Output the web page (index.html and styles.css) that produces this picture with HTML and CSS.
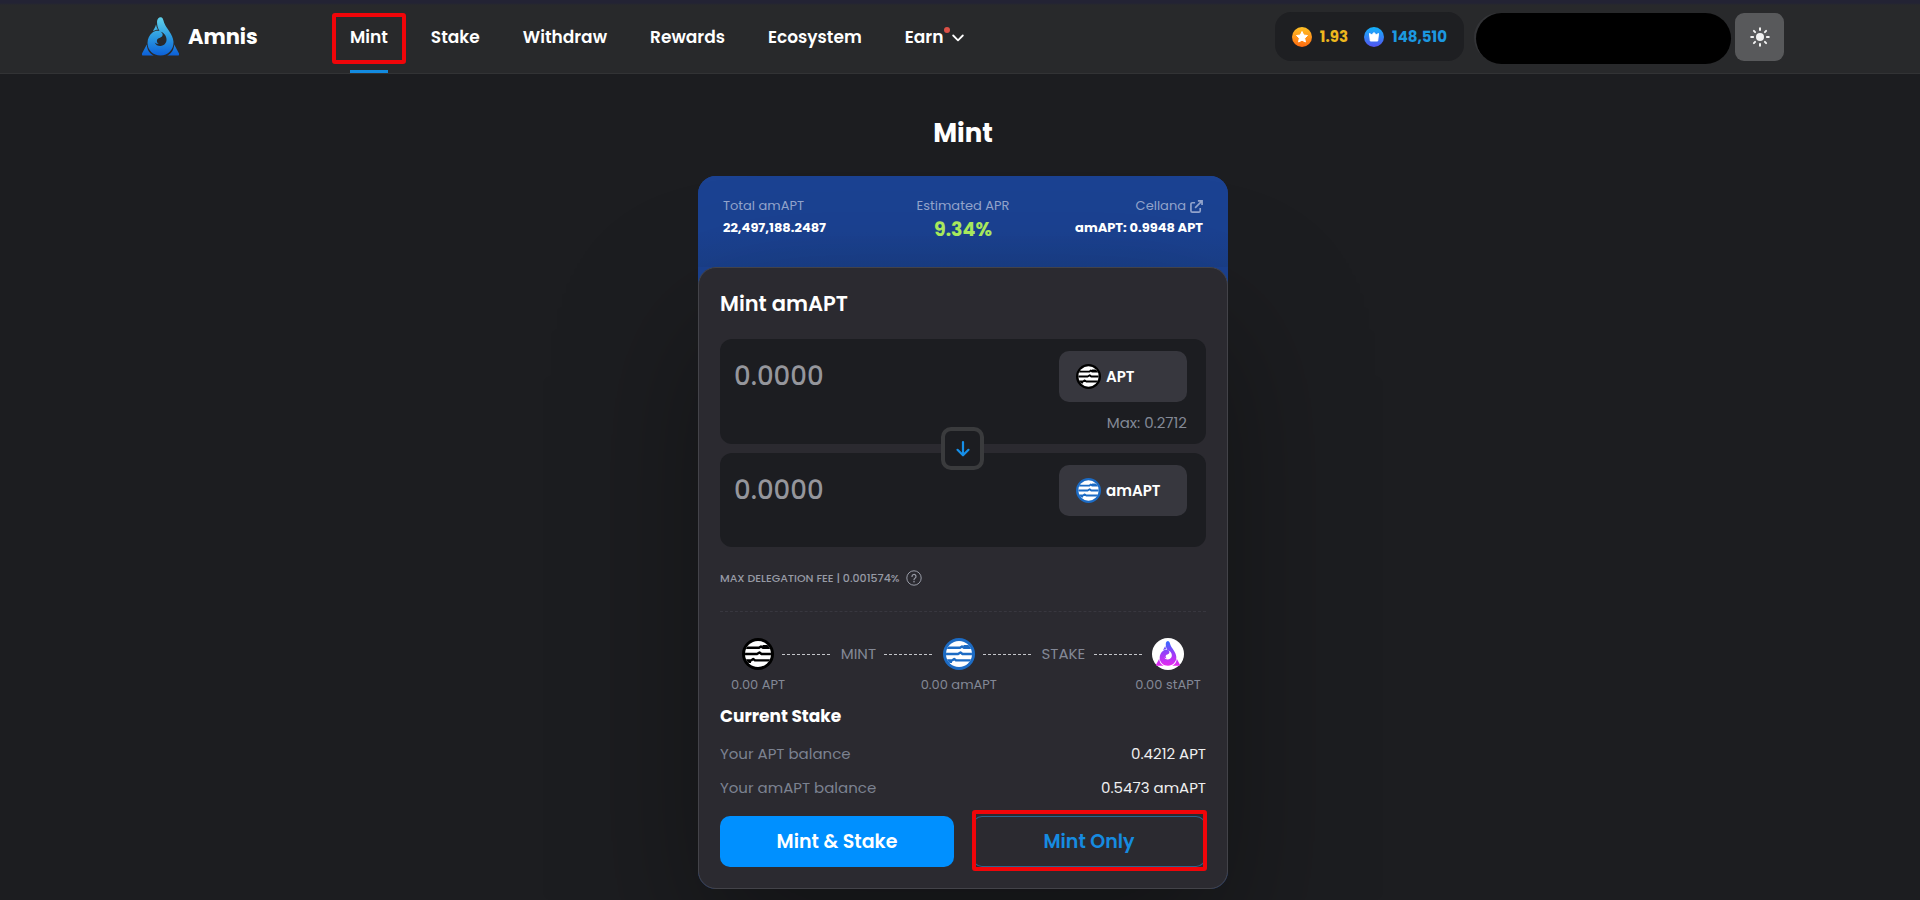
FILE: index.html
```html
<!DOCTYPE html>
<html lang="en">
<head>
<meta charset="utf-8">
<meta name="viewport" content="width=device-width, initial-scale=1">
<title>Amnis - Mint</title>
<link rel="stylesheet" href="styles.css">
</head>
<body>
<svg class="defs" aria-hidden="true">
  <defs>
    <linearGradient id="drop-blue" gradientUnits="userSpaceOnUse" x1="0" y1="0" x2="0" y2="39"><stop offset="0" stop-color="#62d2ea"/><stop offset="0.5" stop-color="#2c9be0"/><stop offset="1" stop-color="#0c5fd8"/></linearGradient>
    <linearGradient id="drop-pink" gradientUnits="userSpaceOnUse" x1="0" y1="0" x2="0" y2="39"><stop offset="0" stop-color="#2f6bff"/><stop offset="0.5" stop-color="#9a3cf8"/><stop offset="1" stop-color="#e828f0"/></linearGradient>
    <linearGradient id="gold" x1="0" y1="0" x2="0" y2="1"><stop offset="0" stop-color="#ffc226"/><stop offset="1" stop-color="#ff6a10"/></linearGradient>
    <linearGradient id="azure" x1="0" y1="0" x2="0" y2="1"><stop offset="0" stop-color="#12b4fb"/><stop offset="1" stop-color="#5453f0"/></linearGradient>
    <clipPath id="disc"><circle cx="16" cy="16" r="13"/></clipPath>
    <symbol id="aptos" viewBox="0 0 32 32">
      <circle cx="16" cy="16" r="16" fill="currentColor"/>
      <circle cx="16" cy="16" r="13" fill="#fff"/>
      <g clip-path="url(#disc)" fill="none" stroke="currentColor" stroke-width="2.4" stroke-linejoin="round">
        <path d="M2 9.800h15l2-1.400 2 1.400h9"/>
        <path d="M2 16h13l2.500-1.600 2 1.600H30"/>
        <path d="M2 22.400h7l2.200-1.400 2 1.400H30"/>
        <path d="M20.500 8.200H30M2 23.800h7"/>
      </g>
    </symbol>
    <symbol id="drop" viewBox="0 0 37 39">
      <path fill-rule="evenodd" d="M15 5C15 1.500 17 0 19 .2c2.200.3 2.200 3.300 3.500 6.300C24.500 11.500 31 17 31.500 25c.4 7.500-5.500 13.500-13 13.500S5.500 33 5.500 26c0-4.500 2-8 5-10.500 2-1.600 4.500-2 7-1.500-1.500-2.500-2.500-5.500-2.500-9zM17.500 14.500c3 .8 4 3 2.500 5-1.200 1.500-3.800 1.200-4.800 3-.8 1.600-.2 3.500 1.500 4.300-1.800.2-3-.3-4-1.300 1 2.500 3.300 3.700 5.800 3.500 3.800-.3 6.300-3.200 6-7-.3-4-3.300-6.900-7-7.500z"/>
      <path d="M14 7.500C13.500 10.500 11.500 12 11 14.300c1.500-1 3.500-1.600 5-1.500-1-1.500-1.700-3.300-2-5.300z"/>
      <path d="M4.800 27.500 0 36.500c-.5 1.200 0 2 1.300 2h10.500C7.500 36.500 5 32.500 4.800 27.500zM32.200 27.500l4.800 9c.5 1.200 0 2-1.300 2H25.200c4.300-2 6.800-6 7-11z"/>
    </symbol>
  </defs>
</svg>

<header class="topbar">
  <div class="topbar-inner">
    <a class="brand" href="#">
      <svg class="brand-logo" fill="url(#drop-blue)" aria-hidden="true"><use href="#drop"/></svg>
      <span>Amnis</span>
    </a>
    <nav class="nav" aria-label="Main">
      <a class="nav-link nav-link-active" href="#">Mint<span class="mark mark-nav"></span></a>
      <a class="nav-link" href="#">Stake</a>
      <a class="nav-link" href="#">Withdraw</a>
      <a class="nav-link" href="#">Rewards</a>
      <a class="nav-link" href="#">Ecosystem</a>
      <a class="nav-link nav-link-menu" href="#"><span class="earn">Earn<span class="dot"></span></span>
        <svg class="chevron" viewBox="0 0 12 8" aria-hidden="true"><path d="M1.200 1.500 6 6.300l4.800-4.800" fill="none" stroke="currentColor" stroke-width="1.800" stroke-linecap="round" stroke-linejoin="round"/></svg>
      </a>
    </nav>
    <div class="tools">
      <div class="points">
        <span class="point point-gold">
          <svg viewBox="0 0 20 20" aria-hidden="true"><circle cx="10" cy="10" r="10" fill="url(#gold)"/><path d="m10 4.500 1.700 3.500 3.800.5-2.800 2.700.7 3.800-3.400-1.800L6.600 15l.7-3.800-2.800-2.700L8.300 8z" fill="#fff" stroke="#fff" stroke-linejoin="round"/></svg>
          1.93
        </span>
        <span class="point point-blue">
          <svg viewBox="0 0 20 20" aria-hidden="true"><circle cx="10" cy="10" r="10" fill="url(#azure)"/><path d="m5.500 6.500 2.300 1.300L10 5.500l2.200 2.300 2.300-1.300-.8 7.500H6.300z" fill="#fff" stroke="#fff" stroke-linejoin="round"/></svg>
          148,510
        </span>
      </div>
      <div class="wallet"></div>
      <button class="theme" type="button" aria-label="Toggle theme">
        <svg viewBox="0 0 20 20" aria-hidden="true"><circle cx="10" cy="10" r="4" fill="currentColor"/><path d="M10 1.200v1.900M10 16.900v1.900M1.200 10h1.900M16.900 10h1.900M3.900 3.900l1.200 1.200M14.900 14.900l1.200 1.200M3.900 16.100l1.200-1.200M14.900 5.100l1.200-1.200" stroke="currentColor" stroke-width="2" stroke-linecap="round"/></svg>
      </button>
    </div>
  </div>
</header>

<main class="page">
  <h1 class="page-title">Mint</h1>
  <section class="widget">
    <div class="stats">
      <div class="stat">
        <span class="stat-label">Total amAPT</span>
        <strong class="stat-value">22,497,188.2487</strong>
      </div>
      <div class="stat stat-center">
        <span class="stat-label">Estimated APR</span>
        <strong class="stat-value stat-apr">9.34%</strong>
      </div>
      <div class="stat stat-right">
        <a class="stat-label stat-link" href="#">Cellana
          <svg viewBox="0 0 14 14" aria-hidden="true"><path d="M5.500 3H2.500A1.500 1.500 0 0 0 1 4.500v7A1.500 1.500 0 0 0 2.500 13h7a1.500 1.500 0 0 0 1.500-1.500v-3M8.500 1H13v4.500M13 1 5.500 8.500" fill="none" stroke="currentColor" stroke-width="1.800"/></svg>
        </a>
        <strong class="stat-value">amAPT: 0.9948 APT</strong>
      </div>
    </div>

    <form class="card">
      <h2 class="card-title">Mint amAPT</h2>
      <div class="fields">
        <div class="field">
          <input class="amount" type="text" placeholder="0.0000" aria-label="APT amount">
          <div class="field-side">
            <button class="token" type="button"><svg class="coin" aria-hidden="true"><use href="#aptos"/></svg>APT</button>
            <span class="max">Max: 0.2712</span>
          </div>
        </div>
        <div class="field">
          <input class="amount" type="text" placeholder="0.0000" aria-label="amAPT amount">
          <div class="field-side">
            <button class="token" type="button"><svg class="coin coin-blue" aria-hidden="true"><use href="#aptos"/></svg>amAPT</button>
          </div>
        </div>
        <button class="swap" type="button" aria-label="Switch direction">
          <svg viewBox="0 0 16 18" aria-hidden="true"><path d="M8 2v13M2.500 9.800 8 15.300l5.500-5.500" fill="none" stroke="currentColor" stroke-width="2.200" stroke-linecap="round" stroke-linejoin="round"/></svg>
        </button>
      </div>

      <p class="fee">MAX DELEGATION FEE | 0.001574%
        <svg viewBox="0 0 16 16" aria-hidden="true"><circle cx="8" cy="8" r="7.200" fill="none" stroke="currentColor"/><path d="M6 6.500a2 2 0 1 1 3 1.700c-.7.4-1 .7-1 1.500" fill="none" stroke="currentColor" stroke-width="1.200" stroke-linecap="round"/><circle cx="8" cy="11.700" r="0.800" fill="currentColor"/></svg>
      </p>

      <div class="flow">
        <div class="step"><svg class="step-icon" aria-hidden="true"><use href="#aptos"/></svg><span>0.00 APT</span></div>
        <i class="dash"></i><span class="flow-label">MINT</span><i class="dash"></i>
        <div class="step"><svg class="step-icon coin-blue" aria-hidden="true"><use href="#aptos"/></svg><span>0.00 amAPT</span></div>
        <i class="dash"></i><span class="flow-label">STAKE</span><i class="dash"></i>
        <div class="step"><svg class="step-icon" viewBox="0 0 32 32" aria-hidden="true"><circle cx="16" cy="16" r="16" fill="#fff"/><use href="#drop" x="4" y="3" width="24" height="25" fill="url(#drop-pink)"/></svg><span>0.00 stAPT</span></div>
      </div>

      <h3 class="stake-title">Current Stake</h3>
      <dl class="balances">
        <div class="balance"><dt>Your APT balance</dt><dd>0.4212 APT</dd></div>
        <div class="balance"><dt>Your amAPT balance</dt><dd>0.5473 amAPT</dd></div>
      </dl>

      <div class="actions">
        <button class="btn btn-primary" type="button">Mint &amp; Stake</button>
        <button class="btn btn-outline" type="button">Mint Only<span class="mark mark-button"></span></button>
      </div>
    </form>
  </section>
</main>
</body>
</html>
```

FILE: styles.css
```css
* {
  box-sizing: border-box;
}

body {
  margin: 0;
  min-height: 100vh;
  background: #1c1d20;
  color: #fff;
  font-family: Poppins, Inter, sans-serif;
  font-size: 14px;
}

h1, h2, h3, p, dl, dd {
  margin: 0;
}

a {
  color: inherit;
  text-decoration: none;
}

button, input {
  font: inherit;
  color: inherit;
  border: 0;
  background: none;
  padding: 0;
}

.defs {
  position: absolute;
  width: 0;
  height: 0;
}

/* Header */

.topbar {
  height: 74px;
  background: linear-gradient(#232334 3px, #28292b 5px);
  border-bottom: 1px solid #323335;
}

.topbar-inner {
  display: flex;
  align-items: center;
  height: 100%;
  padding: 0 136px 0 142px;
}

.brand {
  display: flex;
  align-items: center;
  gap: 9px;
  width: 208px;
  font-size: 21px;
  font-weight: 700;
}

.brand-logo {
  width: 37px;
  height: 39px;
}

.nav {
  display: flex;
  align-self: stretch;
  gap: 43px;
}

.nav-link {
  position: relative;
  display: flex;
  align-items: center;
  font-size: 17px;
  font-weight: 600;
}

.nav-link-active::after {
  content: "";
  position: absolute;
  right: 0;
  bottom: 0;
  left: 0;
  height: 3px;
  background: #128ae0;
}

.nav-link-menu {
  gap: 9px;
}

.earn {
  position: relative;
}

.dot {
  position: absolute;
  top: 3px;
  right: -7px;
  width: 6px;
  height: 6px;
  border-radius: 50%;
  background: #dc5046;
}

.chevron {
  width: 12px;
  height: 8px;
  margin-top: 3px;
}

.mark {
  position: absolute;
  border: 4px solid #f00509;
  border-radius: 3px;
  pointer-events: none;
}

.mark-nav {
  top: 13px;
  right: -18px;
  left: -18px;
  height: 51px;
}

.mark-button {
  inset: -6px -1px -4px 0;
}

.tools {
  display: flex;
  align-items: center;
  margin-left: auto;
}

.points {
  display: flex;
  align-items: center;
  gap: 16px;
  height: 49px;
  padding: 0 17px;
  border-radius: 16px;
  background: #1e1f22;
}

.point {
  display: flex;
  align-items: center;
  gap: 8px;
  font-size: 15px;
  font-weight: 700;
}

.point svg {
  width: 20px;
  height: 20px;
}

.point-gold {
  color: #eeb81e;
}

.point-blue {
  color: #1c98e0;
}

.wallet {
  width: 255px;
  height: 51px;
  margin: 3px 0 0 12px;
  border-radius: 26px;
  background: #000;
  box-shadow: -3px -1px 0 -1px #333437;
}

.theme {
  display: grid;
  place-items: center;
  width: 49px;
  height: 48px;
  margin-left: 4px;
  border-radius: 9px;
  background: #58595b;
  color: #f2f2f2;
}

.theme svg {
  width: 20px;
  height: 20px;
}

/* Page */

.page {
  display: flex;
  flex-direction: column;
  align-items: center;
  padding: 41px 0 8px 6px;
}

.page-title {
  margin-bottom: 25px;
  font-size: 26px;
  font-weight: 700;
  line-height: 36px;
}

.widget {
  width: 100%;
  max-width: 530px;
  border-radius: 18px;
  background: #1b4292;
}

.stats {
  display: grid;
  grid-template-columns: 1fr 1fr 1fr;
  min-height: 91px;
  padding: 20px 25px 0;
  border-radius: 18px 18px 0 0;
  background: linear-gradient(#1b4292 60%, #1a3f89);
}

.stat {
  display: flex;
  flex-direction: column;
  gap: 2px;
  white-space: nowrap;
}

.stat-center {
  align-items: center;
}

.stat-right {
  align-items: flex-end;
}

.stat-label {
  color: #92a3cb;
  font-size: 13px;
  line-height: 20px;
}

.stat-link {
  display: flex;
  align-items: center;
  gap: 4px;
}

.stat-link svg {
  width: 13px;
  height: 13px;
}

.stat-value {
  font-size: 13px;
  line-height: 20px;
}

.stat-apr {
  color: #a8e85c;
  font-size: 19px;
  line-height: 24px;
}

.card {
  padding: 20px 21px 21px;
  border: 1px solid #434349;
  border-radius: 18px;
  background: #2b2a30;
  box-shadow: 0 60px 140px rgba(0, 0, 0, 0.35);
}

.card-title {
  margin-bottom: 19px;
  font-size: 21px;
  font-weight: 600;
  line-height: 32px;
}

.fields {
  position: relative;
  display: grid;
  grid-template-columns: minmax(0, 1fr);
  gap: 9px;
}

.field {
  display: flex;
  justify-content: space-between;
  min-height: 94px;
  padding: 12px 19px 9px 14px;
  border-radius: 12px;
  background: #1c1d21;
}

.amount {
  flex: 1;
  min-width: 0;
  height: 50px;
  font-size: 26px;
  font-weight: 500;
}

.amount::placeholder {
  color: #95969c;
  opacity: 1;
}

.field-side {
  display: flex;
  flex-direction: column;
  gap: 9px;
}

.token {
  display: flex;
  align-items: center;
  gap: 5px;
  width: 128px;
  height: 51px;
  padding-left: 17px;
  border-radius: 10px;
  background: #37373e;
  font-size: 15px;
  font-weight: 600;
}

.coin {
  width: 25px;
  height: 25px;
  color: #000;
}

.coin-blue {
  color: #1c6bc4;
}

.max {
  color: #838996;
  font-size: 15px;
  line-height: 24px;
  text-align: right;
}

.swap {
  position: absolute;
  top: 88px;
  left: 50%;
  display: grid;
  place-items: center;
  width: 43px;
  height: 43px;
  margin-left: -22px;
  border: 4px solid #3a3b3d;
  border-radius: 10px;
  background: #1c1d21;
  color: #168fe8;
}

.swap svg {
  width: 16px;
  height: 18px;
}

.fee {
  display: flex;
  align-items: center;
  gap: 6px;
  margin-top: 22px;
  padding-bottom: 24px;
  border-bottom: 1px dashed #38373f;
  color: #989ba6;
  font-size: 11px;
  font-weight: 500;
  line-height: 18px;
}

.fee svg {
  width: 16px;
  height: 16px;
}

.flow {
  display: flex;
  align-items: flex-start;
  justify-content: space-between;
  padding: 26px 22px 0 22px;
  color: #838896;
}

.step {
  display: flex;
  flex-direction: column;
  align-items: center;
  gap: 5px;
  width: 32px;
  font-size: 13px;
  line-height: 20px;
  white-space: nowrap;
}

.step-icon {
  flex: none;
  width: 32px;
  height: 32px;
  color: #000;
}

.step-icon.coin-blue {
  color: #1c6bc4;
}

.flow-label {
  font-size: 15px;
  line-height: 32px;
}

.dash {
  width: 50px;
  height: 1px;
  margin-top: 16px;
  background: repeating-linear-gradient(90deg, #c4c5ca 0 3px, transparent 3px 5px);
}

.stake-title {
  margin-top: 8px;
  font-size: 17px;
  font-weight: 700;
  line-height: 26px;
}

.balances {
  display: grid;
  gap: 10px;
  margin: 13px 0 16px;
  font-size: 15px;
  line-height: 24px;
}

.balance {
  display: flex;
  justify-content: space-between;
}

.balance dt {
  color: #7c8290;
}

.balance dd {
  color: #eeeeef;
}

.actions {
  display: grid;
  grid-template-columns: 1fr 1fr;
  gap: 18px;
}

.btn {
  position: relative;
  height: 51px;
  border-radius: 10px;
  font-size: 19px;
  font-weight: 600;
}

.btn-primary {
  background: #0090ff;
}

.btn-outline {
  box-shadow: inset 0 0 0 1px #2a6590;
  color: #168be0;
}
```
